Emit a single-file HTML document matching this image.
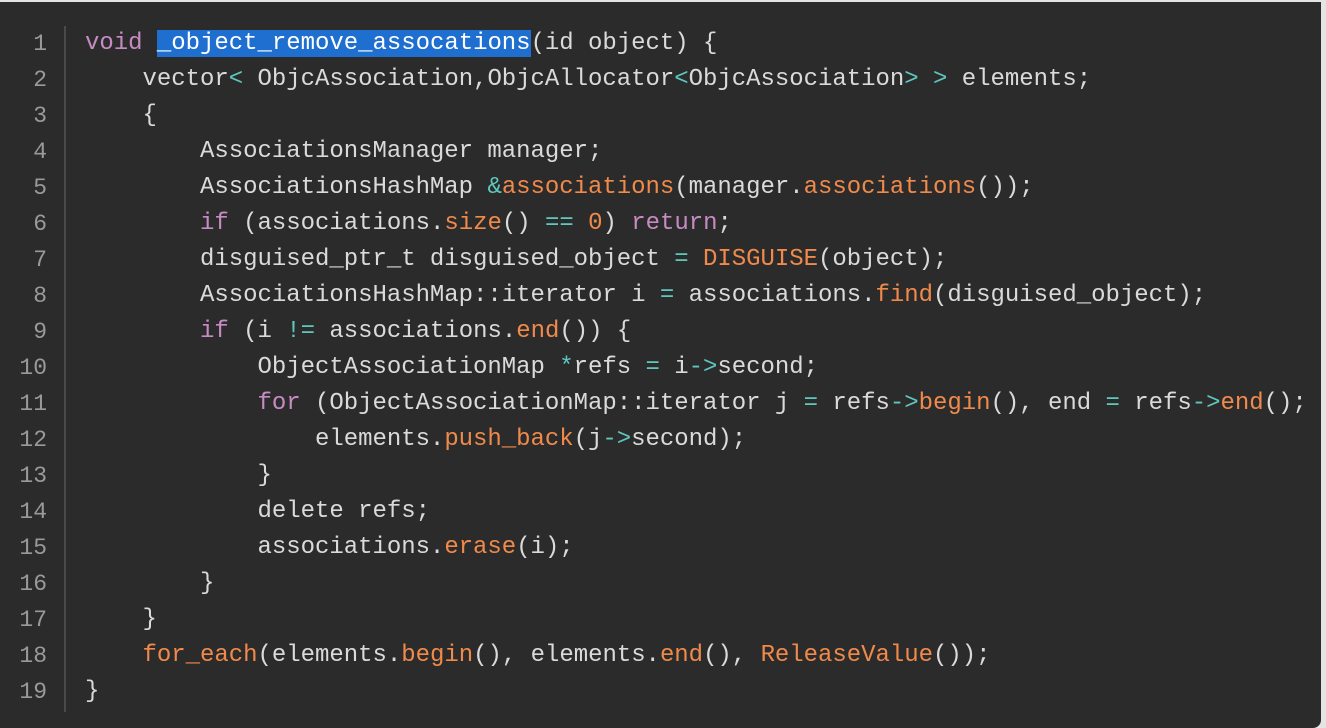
<!DOCTYPE html>
<html><head><meta charset="utf-8"><style>
html,body{margin:0;padding:0;width:1326px;height:728px;overflow:hidden;background:#e4e4e4;}
.box{position:absolute;left:0;top:2px;width:1321px;height:726px;background:#2b2b2b;border-bottom-right-radius:8px;}
.gut{position:absolute;left:64px;top:26px;width:2px;height:686px;background:#4a4a4a;}
.ln{position:absolute;left:0;top:26px;width:47px;text-align:right;font:23px/36px "Liberation Mono",monospace;color:#9a9a9a;white-space:pre;}
.code{position:absolute;left:85px;top:26px;font:24px/36px "Liberation Mono",monospace;color:#dadada;white-space:pre;letter-spacing:-0.03px;}
.k{color:#c68bc2}.f{color:#f08a4b}.o{color:#5ec8bf}
.sel{background:#1f6fd0;color:#fff}
</style></head><body>
<div class="box"></div>
<div class="gut"></div>
<div class="ln">1
2
3
4
5
6
7
8
9
10
11
12
13
14
15
16
17
18
19</div>
<div class="code"><span class="k">void</span> <span class="sel">_object_remove_assocations</span>(id object) {
    vector<span class="o">&lt;</span> ObjcAssociation,ObjcAllocator<span class="o">&lt;</span>ObjcAssociation<span class="o">&gt;</span> <span class="o">&gt;</span> elements;
    {
        AssociationsManager manager;
        AssociationsHashMap <span class="o">&amp;</span><span class="f">associations</span>(manager.<span class="f">associations</span>());
        <span class="k">if</span> (associations.<span class="f">size</span>() <span class="o">==</span> <span class="f">0</span>) <span class="k">return</span>;
        disguised_ptr_t disguised_object <span class="o">=</span> <span class="f">DISGUISE</span>(object);
        AssociationsHashMap::iterator i <span class="o">=</span> associations.<span class="f">find</span>(disguised_object);
        <span class="k">if</span> (i <span class="o">!=</span> associations.<span class="f">end</span>()) {
            ObjectAssociationMap <span class="o">*</span>refs <span class="o">=</span> i<span class="o">-&gt;</span>second;
            <span class="k">for</span> (ObjectAssociationMap::iterator j <span class="o">=</span> refs<span class="o">-&gt;</span><span class="f">begin</span>(), end <span class="o">=</span> refs<span class="o">-&gt;</span><span class="f">end</span>();
                elements.<span class="f">push_back</span>(j<span class="o">-&gt;</span>second);
            }
            delete refs;
            associations.<span class="f">erase</span>(i);
        }
    }
    <span class="f">for_each</span>(elements.<span class="f">begin</span>(), elements.<span class="f">end</span>(), <span class="f">ReleaseValue</span>());
}</div>
</body></html>
